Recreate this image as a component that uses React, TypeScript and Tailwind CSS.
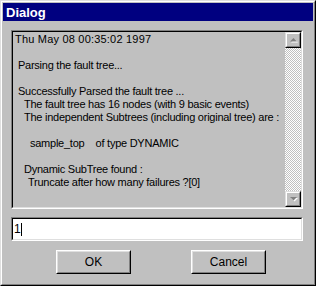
import React from "react";

const lines: { text: string; indent: number; wide?: boolean }[] = [
  { text: "Thu May 08 00:35:02 1997", indent: 0, wide: true },
  { text: "", indent: 0 },
  { text: "Parsing the fault tree...", indent: 3 },
  { text: "", indent: 0 },
  { text: "Successfully Parsed the fault tree ...", indent: 3 },
  { text: "The fault tree has 16 nodes (with 9 basic events)", indent: 9 },
  { text: "The independent Subtrees (including original tree) are :", indent: 9 },
  { text: "", indent: 0 },
  { text: "sample_top    of type DYNAMIC", indent: 15 },
  { text: "", indent: 0 },
  { text: "Dynamic SubTree found :", indent: 9 },
  { text: "Truncate after how many failures ?[0]", indent: 13 },
];

function ScrollButton({ up }: { up?: boolean }) {
  return (
    <div className="w-4 h-4 border border-t-[#dfdfdf] border-l-[#dfdfdf] border-b-black border-r-black">
      <div className="w-full h-full border border-t-white border-l-white border-b-[#808080] border-r-[#808080] bg-[#c0c0c0] flex items-center justify-center">
        <svg width="9" height="6" viewBox="0 0 9 6">
          {up ? (
            <>
              <path d="M4.5 1 L8 4.5 L1 4.5 Z" fill="#ffffff" transform="translate(1 1)" />
              <path d="M4.5 1 L8 4.5 L1 4.5 Z" fill="#808080" />
            </>
          ) : (
            <>
              <path d="M1 1 L8 1 L4.5 4.5 Z" fill="#ffffff" transform="translate(1 1)" />
              <path d="M1 1 L8 1 L4.5 4.5 Z" fill="#808080" />
            </>
          )}
        </svg>
      </div>
    </div>
  );
}

function Win95Button({ label }: { label: string }) {
  return (
    <div className="w-[75px] h-[24px] border border-t-white border-l-white border-b-black border-r-black">
      <div className="w-full h-full border border-t-[#dfdfdf] border-l-[#dfdfdf] border-b-[#808080] border-r-[#808080] flex items-center justify-center text-[12px] text-black">
        {label}
      </div>
    </div>
  );
}

export default function App() {
  return (
    <div
      className="w-[316px] h-[286px] bg-[#c0c0c0] border border-t-[#dfdfdf] border-l-[#dfdfdf] border-b-black border-r-black"
      style={{ fontFamily: '"Liberation Sans", Arial, sans-serif' }}
    >
      <div className="w-full h-full border border-t-white border-l-white border-b-[#808080] border-r-[#808080] p-px flex flex-col">
        {/* Title bar */}
        <div className="h-[18px] bg-[#000080] flex items-center pl-[3px]">
          <span className="text-white font-bold text-[13px] leading-none">Dialog</span>
        </div>

        {/* Output box */}
        <div className="mt-[9px] ml-[8px] w-[292px] h-[179px] border border-t-[#808080] border-l-[#808080] border-b-white border-r-white">
          <div className="w-full h-full border border-t-black border-l-black border-b-[#dfdfdf] border-r-[#dfdfdf] flex">
            <div className="flex-1 pl-[2px] pt-[1px] overflow-hidden text-[11px] leading-[13px] text-black">
              {lines.map((l, i) => (
                <div
                  key={i}
                  className={l.wide ? "h-[13px] whitespace-pre tracking-[0.2px]" : "h-[13px] whitespace-pre tracking-[-0.25px]"}
                  style={{ paddingLeft: l.indent }}
                >
                  {l.text}
                </div>
              ))}
            </div>
            <div className="w-4 flex flex-col">
              <ScrollButton up />
              <div className="flex-1 bg-[repeating-conic-gradient(#c0c0c0_0_25%,#ffffff_0_50%)] bg-[length:2px_2px]" />
              <ScrollButton />
            </div>
          </div>
        </div>

        {/* Input */}
        <div className="mt-[8px] ml-[8px] w-[292px] h-[24px] border border-t-[#808080] border-l-[#808080] border-b-white border-r-white">
          <div className="w-full h-full border border-t-black border-l-black border-b-[#dfdfdf] border-r-[#dfdfdf] bg-white flex items-center pl-[1px] text-[12px] text-black">
            <span>1</span>
            <span className="w-px h-[13px] bg-black" />
          </div>
        </div>

        {/* Buttons */}
        <div className="mt-[9px] flex gap-[60px] pl-[53px]">
          <Win95Button label="OK" />
          <Win95Button label="Cancel" />
        </div>
      </div>
    </div>
  );
}
